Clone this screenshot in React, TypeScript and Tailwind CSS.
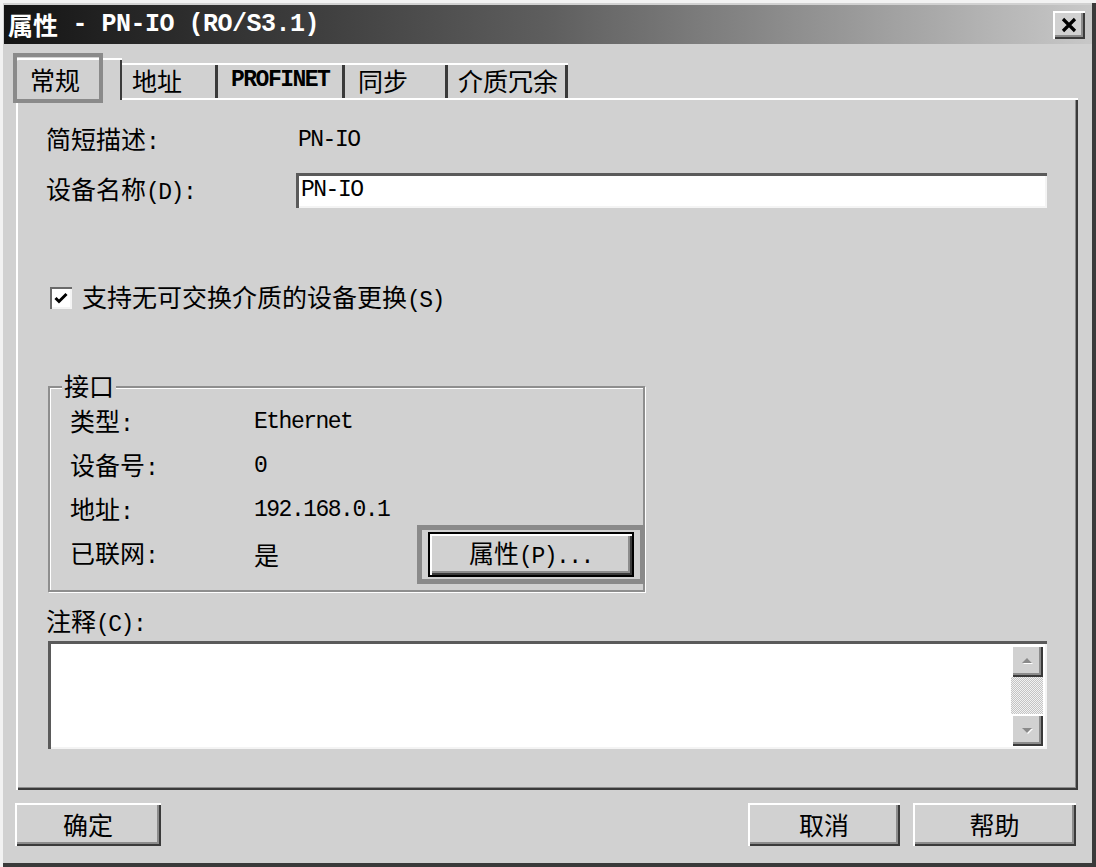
const raised =
  'shadow-[inset_2px_2px_0_#ffffff,inset_-2px_-2px_0_#3a3a3a,inset_-4px_-4px_0_#8c8c8c]'
const sunken = 'shadow-[inset_3px_3px_0_#5a5a5a,inset_-2px_-2px_0_#f4f4f4]'

const tabs = [
  { label: '地址', width: 'w-[96px]', pad: 'pl-[10px]' },
  { label: 'PROFINET', width: 'w-[127px]', pad: 'pl-[13px]', latin: true },
  { label: '同步', width: 'w-[103px]', pad: 'pl-[13px]' },
  { label: '介质冗余', width: 'w-[120px]', pad: 'pl-[10px]' }
]

const interfaceRows = [
  { label: '类型', value: 'Ethernet' },
  { label: '设备号', value: '0' },
  { label: '地址', value: '192.168.0.1' }
]

function L({ children, className = '' }: { children: React.ReactNode; className?: string }) {
  return (
    <span className={`font-['Liberation_Mono',monospace] text-[23px] tracking-[-1.5px] ${className}`}>
      {children}
    </span>
  )
}

function ArrowIcon({ down = false }: { down?: boolean }) {
  return (
    <svg width="14" height="10" viewBox="0 0 14 10">
      {down ? (
        <>
          <polygon points="2,3 12,3 7,8" fill="#ffffff" transform="translate(1,1)" />
          <polygon points="2,3 12,3 7,8" fill="#8a8a8a" />
        </>
      ) : (
        <>
          <polygon points="7,2 12,7 2,7" fill="#ffffff" transform="translate(1,1)" />
          <polygon points="7,2 12,7 2,7" fill="#8a8a8a" />
        </>
      )}
    </svg>
  )
}

export default function App() {
  return (
    <div className="w-[1096px] h-[867px] bg-[#d1d1d1] p-[4px] flex flex-col text-black text-[25px] leading-none font-['Noto_Sans_CJK_SC',sans-serif] shadow-[inset_3px_3px_0_#f2f2f2,inset_-4px_-4px_0_#3a3a3a]">
      {/* Title bar */}
      <div className="mt-[1px] h-[39px] flex items-center justify-between pl-[4px] pr-[7px] bg-[linear-gradient(to_right,#141414,#5e5e5e_50%,#c8c8c8)]">
        <div className="flex items-center text-white font-bold">
          <span>属性</span>
          <span className="font-['Liberation_Mono',monospace] text-[25px] tracking-[-0.5px] font-bold whitespace-pre"> - PN-IO (RO/S3.1)</span>
        </div>
        <div className={`w-[32px] h-[28px] bg-[#d1d1d1] flex items-center justify-center ${raised}`}>
          <svg width="18" height="16" viewBox="0 0 18 16">
            <path d="M3 2 L15 14 M15 2 L3 14" stroke="#000" strokeWidth="3.2" />
          </svg>
        </div>
      </div>

      {/* Tabs */}
      <div className="mt-[14px] h-[42px] flex items-end pl-[10px] relative z-10">
        <div className="relative w-[108px] h-[42px] bg-[#d1d1d1] flex items-center pl-[16px] shadow-[inset_2px_2px_0_#ffffff,inset_-2px_0_0_#3a3a3a] rounded-tl-[3px]">
          <span>常规</span>
          <div className="absolute left-[-1px] top-[-5px] w-[90px] h-[50px] border-[4px] border-[#8a8a8a]" />
        </div>
        {tabs.map((tab) => (
          <div
            key={tab.label}
            className={`${tab.width} ${tab.pad} h-[35px] mb-[2px] flex items-center shadow-[inset_0_2px_0_#ffffff,inset_-3px_0_0_#3a3a3a]`}
          >
            {tab.latin ? <L className="font-bold">{tab.label}</L> : <span>{tab.label}</span>}
          </div>
        ))}
      </div>

      {/* Panel */}
      <div className="ml-[12px] mr-[14px] -mt-[2px] h-[692px] pl-[30px] pr-[31px] flex flex-col shadow-[inset_2px_2px_0_#ffffff,inset_-2px_-2px_0_#3a3a3a,inset_-3px_-3px_0_#8c8c8c]">
        <div className="mt-[27px] h-[30px] flex items-center">
          <span className="w-[252px]">简短描述<L>:</L></span>
          <L>PN-IO</L>
        </div>

        <div className="mt-[18px] h-[35px] flex items-center">
          <span className="w-[250px] shrink-0">设备名称<L>(D):</L></span>
          <div className={`flex-1 h-[35px] bg-white flex items-center pl-[5px] ${sunken}`}>
            <L>PN-IO</L>
          </div>
        </div>

        <div className="mt-[76px] h-[28px] flex items-center">
          <div className="ml-[4px] w-[22px] h-[22px] bg-white flex items-center justify-center shadow-[inset_2px_2px_0_#6a6a6a,inset_-2px_-2px_0_#f4f4f4]">
            <svg width="14" height="12" viewBox="0 0 14 12">
              <path d="M1.5 6 L5 9.5 L12.5 2" stroke="#000" strokeWidth="3" fill="none" />
            </svg>
          </div>
          <span className="ml-[10px]">支持无可交换介质的设备更换<L>(S)</L></span>
        </div>

        {/* Interface group */}
        <div className="relative mt-[74px] ml-[2px] w-[597px] h-[206px] pt-[12px] flex flex-col border-2 border-[#8e8e8e] shadow-[1px_1px_0_#ffffff,inset_1px_1px_0_#ffffff]">
          <span className="absolute left-[12px] top-[-15px] px-[2px] bg-[#d1d1d1]">接口</span>
          {interfaceRows.map((row) => (
            <div key={row.label} className="h-[44px] flex items-center pl-[20px]">
              <span className="w-[184px]">{row.label}<L>:</L></span>
              <L>{row.value}</L>
            </div>
          ))}
          <div className="h-[44px] flex items-center pl-[20px]">
            <span className="w-[184px]">已联网<L>:</L></span>
            <span className="w-[174px]">是</span>
            <div className="relative">
              <div className="absolute left-[-11px] top-[-7px] w-[228px] h-[59px] border-[5px] border-[#8a8a8a]" />
              <div className="w-[206px] h-[45px] border-2 border-black flex items-center justify-center">
                <div className={`w-full h-full flex items-center justify-center ${raised}`}>
                  <span>属性<L>(P)...</L></span>
                </div>
              </div>
            </div>
          </div>
        </div>

        <div className="mt-[16px] h-[28px] flex items-center">
          <span>注释<L>(C):</L></span>
        </div>

        {/* Comment box */}
        <div className={`mt-[5px] ml-[2px] h-[108px] bg-white flex pt-[4px] pr-[4px] pb-[3px] ${sunken}`}>
          <div className="flex-1" />
          <div className="w-[32px] flex flex-col">
            <div className={`h-[32px] bg-[#d1d1d1] flex items-center justify-center ${raised}`}>
              <ArrowIcon />
            </div>
            <div className="flex-1 bg-[repeating-conic-gradient(#c4c4c4_0_25%,#f2f2f2_0_50%)] bg-[length:2px_2px]" />
            <div className={`h-[32px] bg-[#d1d1d1] flex items-center justify-center ${raised}`}>
              <ArrowIcon down />
            </div>
          </div>
        </div>
      </div>

      {/* Dialog buttons */}
      <div className="mt-[13px] h-[43px] flex pl-[11px] pr-[16px]">
        <div className={`w-[146px] h-full flex items-center justify-center ${raised}`}>确定</div>
        <div className={`ml-auto w-[152px] h-full flex items-center justify-center ${raised}`}>取消</div>
        <div className={`ml-[13px] w-[163px] h-full flex items-center justify-center ${raised}`}>帮助</div>
      </div>
    </div>
  )
}
